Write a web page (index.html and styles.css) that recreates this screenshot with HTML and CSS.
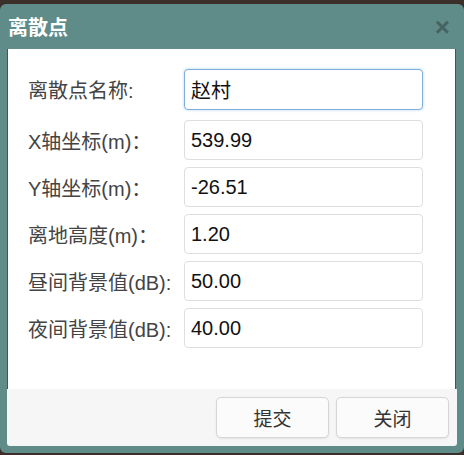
FILE: index.html
```html
<!DOCTYPE html>
<html lang="zh-CN">
<head>
  <meta charset="UTF-8" />
  <meta name="viewport" content="width=device-width, initial-scale=1.0"/>
  <title>离散点</title>
  <link rel="stylesheet" href="styles.css">
</head>
<body>
  <div class="dialog">
    <div class="dialog-header">
      <span class="dialog-title">离散点</span>
      <span class="dialog-close">&times;</span>
    </div>

    <div class="dialog-body">
      <div class="form-row first">
        <label for="name">离散点名称:</label>
        <input type="text" id="name" class="focused" value="赵村" />
      </div>
      <div class="form-row">
        <label for="x">X轴坐标(m)：</label>
        <input type="text" id="x" value="539.99" />
      </div>
      <div class="form-row">
        <label for="y">Y轴坐标(m)：</label>
        <input type="text" id="y" value="-26.51" />
      </div>
      <div class="form-row">
        <label for="h">离地高度(m)：</label>
        <input type="text" id="h" value="1.20" />
      </div>
      <div class="form-row">
        <label for="day">昼间背景值(dB):</label>
        <input type="text" id="day" value="50.00" />
      </div>
      <div class="form-row">
        <label for="night">夜间背景值(dB):</label>
        <input type="text" id="night" value="40.00" />
      </div>
    </div>

    <div class="dialog-footer">
      <button>提交</button>
      <button>关闭</button>
    </div>
  </div>
</body>
</html>
```

FILE: styles.css
```css
body {
  margin: 0;
  height: 455px;
  overflow: hidden;
  font-family: 'Liberation Sans', 'Noto Sans CJK SC', sans-serif;
  background-color: #3a2f29;
  padding-top: 4px;
  box-sizing: border-box;
}

.dialog {
  width: 464px;
  background: #5f8b89;
  border-radius: 6px;
  padding-bottom: 7px;
}

.dialog-header {
  height: 45px;
  display: flex;
  align-items: center;
  justify-content: space-between;
  padding: 0 14px 0 8px;
}

.dialog-title {
  color: #ffffff;
  font-size: 20px;
  font-weight: bold;
}

.dialog-close {
  color: #3f5a58;
  font-size: 26px;
  font-weight: bold;
  line-height: 1;
  opacity: 0.8;
}

.dialog-body {
  margin: 0 8px 0 7px;
  background: #ffffff;
  height: 340px;
  box-sizing: border-box;
  padding: 20px 0 0 20px;
  border-left: 1px solid #3d5857;
  border-right: 1px solid #3d5857;
  display: flex;
  flex-direction: column;
  gap: 7px;
}

.form-row {
  display: flex;
  align-items: center;
  height: 40px;
}

.form-row.first {
  height: 41px;
  margin-bottom: 3px;
}

.form-row label {
  width: 156px;
  font-size: 20px;
  color: #444;
  white-space: nowrap;
}

.form-row input {
  width: 239px;
  height: 40px;
  box-sizing: border-box;
  border: 1px solid #dedede;
  border-radius: 4px;
  padding: 0 6px;
  font-family: 'Liberation Sans', 'Noto Sans CJK SC', sans-serif;
  font-size: 20px;
  color: #111;
  outline: none;
}

.form-row input.focused {
  height: 41px;
  border-color: #7eaedc;
  box-shadow: 0 0 3px rgba(102, 175, 233, 0.5);
}

.dialog-footer {
  margin: 0 7px;
  background: #f6f6f6;
  height: 57px;
  display: flex;
  justify-content: flex-end;
  align-items: flex-start;
  gap: 7px;
  padding: 8px 8px 0 0;
  box-sizing: border-box;
  border-radius: 0 0 3px 3px;
}

.dialog-footer button {
  width: 113px;
  height: 41px;
  border: 1px solid #d6d6d6;
  border-radius: 5px;
  background: #fbfbfb;
  box-shadow: 0 1px 2px rgba(0, 0, 0, 0.08);
  font-family: 'Liberation Sans', 'Noto Sans CJK SC', sans-serif;
  font-size: 19px;
  color: #333;
  cursor: pointer;
}
```
